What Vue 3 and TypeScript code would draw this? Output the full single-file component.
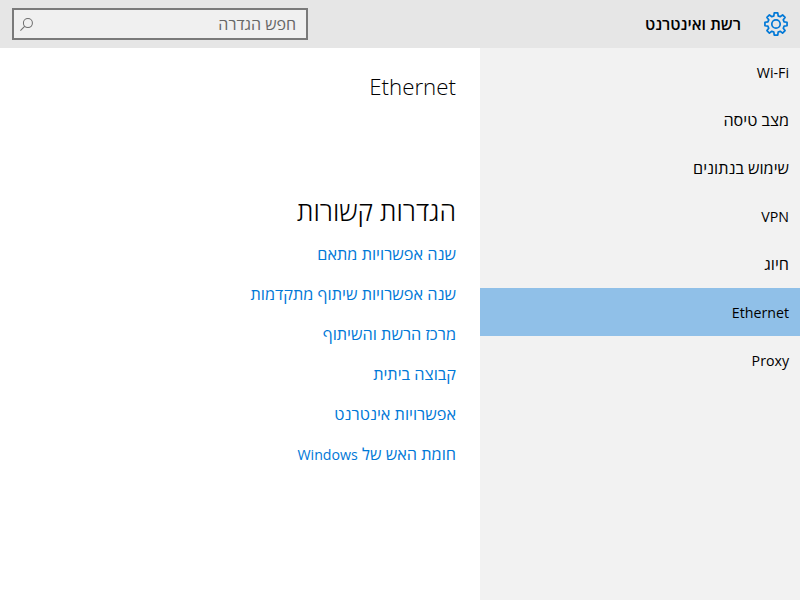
<template>
  <div class="settings" dir="rtl">
    <header class="topbar">
      <div class="brand">
        <svg class="gear" viewBox="0 0 24 24" width="24" height="24" fill="none" stroke="#0078d7" stroke-width="1.7" stroke-linejoin="round">
          <path :d="gearPath" />
          <circle cx="12" cy="12" r="4.200" />
        </svg>
        <span class="brand-title">רשת ואינטרנט</span>
      </div>
      <div class="search">
        <span class="search-text">חפש הגדרה</span>
        <svg viewBox="0 0 16 16" width="15" height="15" fill="none" stroke="#6e6e6e" stroke-width="1.100">
          <circle cx="9.500" cy="6.500" r="4.800" />
          <path d="M6 10 1.500 14.500" />
        </svg>
      </div>
    </header>
    <div class="body">
      <nav class="sidebar">
        <div
          v-for="item in navItems"
          :key="item.label"
          class="nav-item"
          :class="{ active: item.label === 'Ethernet', latin: item.latin }"
        >
          {{ item.label }}
        </div>
      </nav>
      <main class="content">
        <h1 class="page-title">Ethernet</h1>
        <h2 class="section-title">הגדרות קשורות</h2>
        <a v-for="link in links" :key="link.text" class="link">
          {{ link.text }} <span v-if="link.latin" class="latin">{{ link.latin }}</span>
        </a>
      </main>
    </div>
  </div>
</template>

<script setup lang="ts">
const navItems: { label: string; latin?: boolean }[] = [
  { label: "Wi-Fi", latin: true },
  { label: "מצב טיסה" },
  { label: "שימוש בנתונים" },
  { label: "VPN", latin: true },
  { label: "חיוג" },
  { label: "Ethernet", latin: true },
  { label: "Proxy", latin: true },
];

const links: { text: string; latin?: string }[] = [
  { text: "שנה אפשרויות מתאם" },
  { text: "שנה אפשרויות שיתוף מתקדמות" },
  { text: "מרכז הרשת והשיתוף" },
  { text: "קבוצה ביתית" },
  { text: "אפשרויות אינטרנט" },
  { text: "חומת האש של", latin: "Windows" },
];

// 8 teeth around the centre of a 24x24 box
const polar = (r: number, deg: number): string => {
  const a = (deg * Math.PI) / 180;
  return `${(12 + r * Math.cos(a)).toFixed(2)} ${(12 + r * Math.sin(a)).toFixed(2)}`;
};

const gearPath =
  "M" +
  Array.from({ length: 8 }, (_, i) => {
    const mid = i * 45 - 90;
    return [
      polar(8.4, mid - 15),
      polar(11.2, mid - 9),
      polar(11.2, mid + 9),
      polar(8.4, mid + 15),
    ].join("L");
  }).join("L") +
  "Z";
</script>

<style scoped>
.settings {
  width: 800px;
  height: 600px;
  display: flex;
  flex-direction: column;
  overflow: hidden;
  background: #fff;
  color: #000;
  font-family: "Open Sans", "Noto Sans", "DejaVu Sans", sans-serif;
}

.topbar {
  height: 48px;
  flex: none;
  display: flex;
  align-items: center;
  justify-content: space-between;
  background: #e6e6e6;
  padding: 0 12px;
}

.brand {
  display: flex;
  align-items: center;
  gap: 23px;
}

.brand-title {
  font-size: 16px;
  font-weight: 600;
}

.search {
  width: 296px;
  height: 32px;
  box-sizing: border-box;
  border: 2px solid #7a7a7a;
  background: #f0f0f0;
  display: flex;
  align-items: center;
  justify-content: space-between;
  padding: 0 10px 0 5px;
  font-size: 16px;
  color: #666;
}

.body {
  flex: 1;
  display: flex;
}

.sidebar {
  width: 320px;
  flex: none;
  background: #f2f2f2;
}

.nav-item {
  height: 48px;
  display: flex;
  align-items: center;
  padding-right: 11px;
  font-size: 16.2px;
}

.nav-item.latin,
.latin {
  font-size: 14.2px;
}

.nav-item.active {
  background: #90c0e8;
}

.content {
  flex: 1;
  padding: 0 24px;
}

.page-title {
  margin: 0;
  padding-top: 21px;
  height: 125px;
  font-size: 22.3px;
  font-weight: 300;
  line-height: 36px;
  text-align: right;
  direction: ltr;
}

.section-title {
  margin: 0 0 6px;
  font-size: 26.7px;
  font-weight: 300;
  line-height: 34px;
}

.link {
  display: block;
  height: 40px;
  line-height: 40px;
  font-size: 16.3px;
  color: #0078d7;
}
</style>

<style>
html,
body {
  margin: 0;
  background: #fff;
}
</style>
